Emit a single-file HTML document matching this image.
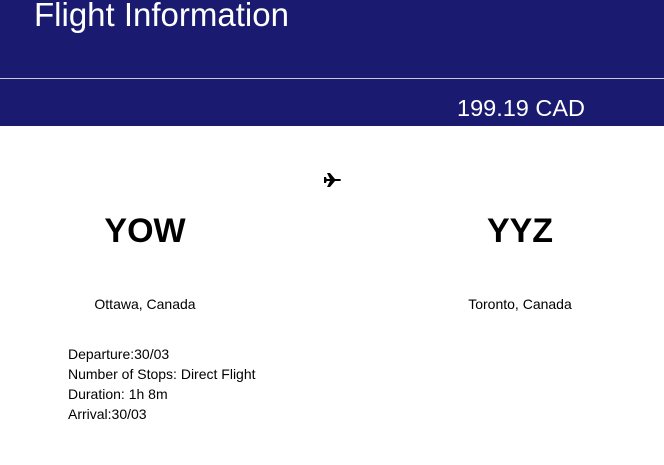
<!DOCTYPE html>
<html><head><style>
body{margin:0;width:664px;height:465px;background:#fff;font-family:"Liberation Sans",Arial,sans-serif;position:relative;overflow:hidden}
.h1{position:absolute;left:0;top:0;width:664px;height:78px;background:#1a1a70}
.ln{position:absolute;left:0;top:78px;width:664px;height:1px;background:#c8c8d4}
.h2{position:absolute;left:0;top:79px;width:664px;height:47px;background:#1a1a70}
.t{position:absolute;color:#fff;white-space:nowrap}
.a{position:absolute;font-weight:bold;font-size:34px;width:200px;text-align:center;top:212px}
.c{position:absolute;font-size:14px;width:200px;text-align:center;top:296px}
.d{position:absolute;left:68px;top:344px;font-size:14px;line-height:20px}
</style></head><body>
<div class="h1"></div><div class="ln"></div><div class="h2"></div>
<div class="t" style="left:34px;top:-4px;font-size:33px">Flight Information</div>
<div class="t" style="left:457px;top:95px;font-size:23.5px">199.19 CAD</div>
<svg style="position:absolute;left:324px;top:172px" width="17" height="16" viewBox="0 0 17 16"><path d="M1 7h5L3 1h3l5 6h4.5c1 0 1.5 .5 1.5 1s-.5 1-1.5 1H11l-5 6H3l3-6H1L0 7z" fill="#000"/><path d="M0 5h2l1 3-1 3H0z" fill="#000"/></svg>
<div class="a" style="left:45px">YOW</div>
<div class="a" style="left:420px">YYZ</div>
<div class="c" style="left:45px">Ottawa, Canada</div>
<div class="c" style="left:420px">Toronto, Canada</div>
<div class="d">Departure:30/03<br>Number of Stops: Direct Flight<br>Duration: 1h 8m<br>Arrival:30/03</div>
</body></html>
